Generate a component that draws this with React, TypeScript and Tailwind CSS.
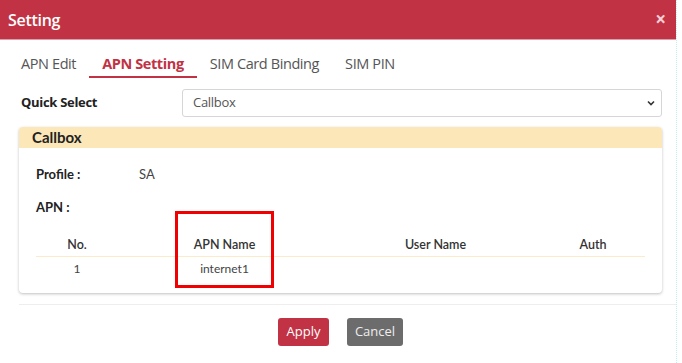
import React from 'react';

const font = { fontFamily: '"Open Sans", "Liberation Sans", sans-serif' };
const lato = { fontFamily: 'Lato, "Liberation Sans", sans-serif' };

const tabs = ['APN Edit', 'APN Setting', 'SIM Card Binding', 'SIM PIN'];

export default function App() {
  return (
    <div className="w-[682px] h-[363px] bg-white flex overflow-hidden" style={font}>
      <div className="w-[676px] flex flex-col">
        {/* Header */}
        <div className="h-[40px] bg-[#c13344] flex items-center justify-between pl-[8px] pr-[10px] border-b border-[#d9a0a8]">
          <span className="text-white text-[16px] font-semibold tracking-[-0.3px]">Setting</span>
          <span className="text-[#f6d0d6] text-[19px] font-bold leading-none">×</span>
        </div>

        {/* Tabs */}
        <div className="flex items-end h-[34px] mt-[4px] pl-[8px]">
          {tabs.map((t) => (
            <div
              key={t}
              className={`px-[13px] pb-[1px] text-[14.5px] tracking-[-0.4px] border-b-2 ${
                t === 'APN Setting'
                  ? 'border-[#c13344] text-[#c13344] font-bold'
                  : 'border-transparent text-[#555]'
              }`}
            >
              {t}
            </div>
          ))}
        </div>

        {/* Quick Select */}
        <div className="flex items-center mt-[11px] pl-[21px] pr-[14px]">
          <span className="w-[161px] text-[13px] font-bold text-[#222] tracking-[-0.3px]">Quick Select</span>
          <div className="flex-1 h-[28px] border border-[#d6d6d6] rounded-[3px] flex items-center justify-between pl-[10px] pr-[6px]">
            <span className="text-[13px] text-[#555] tracking-[-0.3px]">Callbox</span>
            <svg width="8" height="6" viewBox="0 0 8 6">
              <path d="M1 1.5 L4 4.5 L7 1.5" stroke="#333" strokeWidth="1.6" fill="none" />
            </svg>
          </div>
        </div>

        {/* Card */}
        <div className="mt-[10px] ml-[19px] mr-[14px] h-[166px] rounded-[4px] shadow-[0_1px_3px_rgba(0,0,0,0.25)] overflow-hidden flex flex-col" style={lato}>
          <div className="h-[21px] bg-[#fce7b9] flex items-center pl-[13px]">
            <span className="text-[15px] font-bold text-[#222]">Callbox</span>
          </div>
          <div className="relative flex-1 px-[17px] pt-[17px]">
            <div className="flex items-center text-[13px]">
              <span className="w-[103px] font-bold text-[#222]">Profile :</span>
              <span className="text-[#444]">SA</span>
            </div>
            <div className="mt-[13px] text-[13px] font-bold text-[#222]">APN :</div>
            <div className="mt-[18px] text-[12.5px] text-[#333]">
              <div className="grid grid-cols-[82px_213px_209px_106px] h-[22px] items-center border-b border-[#fbebc9] font-semibold">
                <span className="text-center">No.</span>
                <span className="text-center">APN Name</span>
                <span className="text-center">User Name</span>
                <span className="text-center">Auth</span>
              </div>
              <div className="grid grid-cols-[82px_213px_209px_106px] h-[24px] items-center text-[12px] text-[#444]">
                <span className="text-center">1</span>
                <span className="text-center">internet1</span>
                <span />
                <span />
              </div>
            </div>
            <div className="absolute left-[156px] top-[63px] w-[99px] h-[77px] border-[3px] border-[#f00000]" />
          </div>
        </div>

        {/* Footer */}
        <div className="mt-[11px] ml-[19px] border-t border-[#eeeeee] flex justify-center gap-[18px] pt-[13px] pr-[14px]">
          <button className="w-[51px] h-[28px] rounded-[3px] bg-[#c13344] text-white text-[13px]">Apply</button>
          <button className="w-[56px] h-[28px] rounded-[3px] bg-[#6c6c6c] text-[#eee] text-[13px]">Cancel</button>
        </div>
      </div>
      <div className="flex-1 border-l border-dotted border-[#bfeef3]" />
    </div>
  );
}
